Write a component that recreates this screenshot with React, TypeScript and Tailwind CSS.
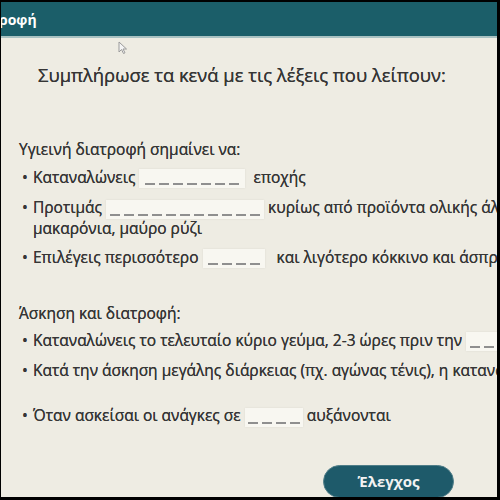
import React from "react";

const Blank = ({ w, dashes }: { w: string; dashes: number }) => (
  <span
    className={`inline-flex items-end justify-center gap-[4px] pb-[3px] h-[19px] bg-[#f8f7f1] shadow-[0_0_2px_rgba(0,0,0,0.08)] align-middle ${w}`}
  >
    {Array.from({ length: dashes }).map((_, i) => (
      <span key={i} className="block w-[10px] h-[2px] bg-[#8f8f8f]" />
    ))}
  </span>
);

const Bullet = () => <span className="w-[14px] pl-[3px]">•</span>;

export default function App() {
  return (
    <div className="w-[500px] h-[500px] bg-black pt-[2px] pl-[1px] pr-[3px] pb-[3px]">
      <div
        className="relative w-full h-full overflow-hidden bg-[#eeece3] text-[#363636] [text-shadow:0_0_0.6px_#363636]"
        style={{ fontFamily: '"Open Sans", "DejaVu Sans", sans-serif' }}
      >
        <div className="h-[36px] bg-[#1b5e69] border-b-[2px] border-[#a9c2c2] flex items-center">
          <span className="text-white font-bold text-[14px] -ml-[2px] [text-shadow:none]">ροφή</span>
        </div>
        <svg className="absolute left-[117px] top-[39px]" width="10" height="14" viewBox="0 0 10 14">
          <path d="M1 1 L1 11 L3.5 8.5 L5.5 12.5 L7 11.8 L5 8 L8.5 8 Z" fill="#f4f4f4" stroke="#9a9a9a" strokeWidth="1" />
        </svg>
        <div className="w-[700px]">
          <div className="pl-[37px] pt-[24px] text-[18.4px] leading-[26px] whitespace-nowrap">
            Συμπλήρωσε τα κενά με τις λέξεις που λείπουν:
          </div>
          <div className="pl-[18px] pt-[52px] text-[15.5px] leading-[18px] whitespace-nowrap">
            <div>Υγιεινή διατροφή σημαίνει να:</div>
            <div className="flex mt-[10px]">
              <Bullet />
              <span>
                Καταναλώνεις <Blank w="w-[106px]" dashes={7} /> &nbsp;εποχής
              </span>
            </div>
            <div className="flex mt-[10px]">
              <Bullet />
              <span>
                Προτιμάς <Blank w="w-[158px]" dashes={11} /> κυρίως από προϊόντα ολικής άλεσης όπως ψωμί,
                <br />
                μακαρόνια, μαύρο ρύζι
              </span>
            </div>
            <div className="flex mt-[11px]">
              <Bullet />
              <span>
                Επιλέγεις περισσότερο <Blank w="w-[62px]" dashes={4} />{" "}&nbsp; και λιγότερο κόκκινο και άσπρο κρέας
              </span>
            </div>
            <div className="mt-[36px]">Άσκηση και διατροφή:</div>
            <div className="flex mt-[9px]">
              <Bullet />
              <span>
                Καταναλώνεις το τελευταίο κύριο γεύμα, 2-3 ώρες πριν την <Blank w="w-[60px]" dashes={4} />
              </span>
            </div>
            <div className="flex mt-[10px]">
              <Bullet />
              <span>Κατά την άσκηση μεγάλης διάρκειας (πχ. αγώνας τένις), η κατανάλωση</span>
            </div>
            <div className="flex mt-[27px]">
              <Bullet />
              <span>
                Όταν ασκείσαι οι ανάγκες σε <Blank w="w-[58px]" dashes={4} /> αυξάνονται
              </span>
            </div>
          </div>
        </div>
        <div className="absolute left-[322px] top-[463px] w-[131px] h-[33px] rounded-full bg-[#1e5a6a] border border-[#4f7d88] flex items-center justify-center text-[#f2f2f2] font-bold text-[15px] [text-shadow:none]">
          Έλεγχος
        </div>
      </div>
    </div>
  );
}
